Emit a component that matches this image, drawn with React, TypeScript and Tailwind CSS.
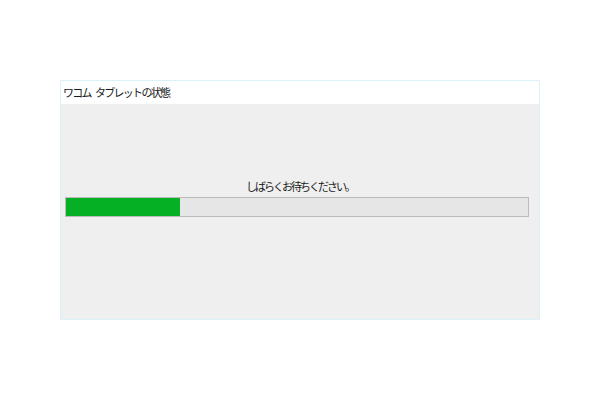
import React from 'react';

// little wacom progress dialog, nothing fancy
const jp = { fontFamily: '"Noto Sans CJK JP", "Noto Sans", sans-serif' };

export default function App() {
  const progress = 24.6;

  return (
    <div className="w-[600px] h-[400px] bg-white pt-[80px] pl-[60px]" style={jp}>
      <div className="w-[480px] h-[240px] flex flex-col border border-[#d9f3f8]">
        <div className="h-[23px] bg-white flex items-center pl-[2px] text-[11px] tracking-[-1.7px] text-[#1a1a1a]">
          <span>ワコム</span>
          <span className="inline-block w-[4px]" />
          <span>タブレットの状態</span>
        </div>
        <div className="flex-1 bg-[#efefef] flex flex-col pt-[74px]">
          <div className="h-[16px] text-center text-[11px] tracking-[-2px] leading-[16px] text-[#1a1a1a]">
            しばらくお待ちください。
          </div>
          <div className="mt-[3px] ml-[4px] w-[464px] h-[20px] border border-[#bcbcbc] bg-[#e6e6e6]">
            <div className="h-full bg-[#06b025]" style={{ width: `${progress}%` }} />
          </div>
        </div>
      </div>
    </div>
  );
}
